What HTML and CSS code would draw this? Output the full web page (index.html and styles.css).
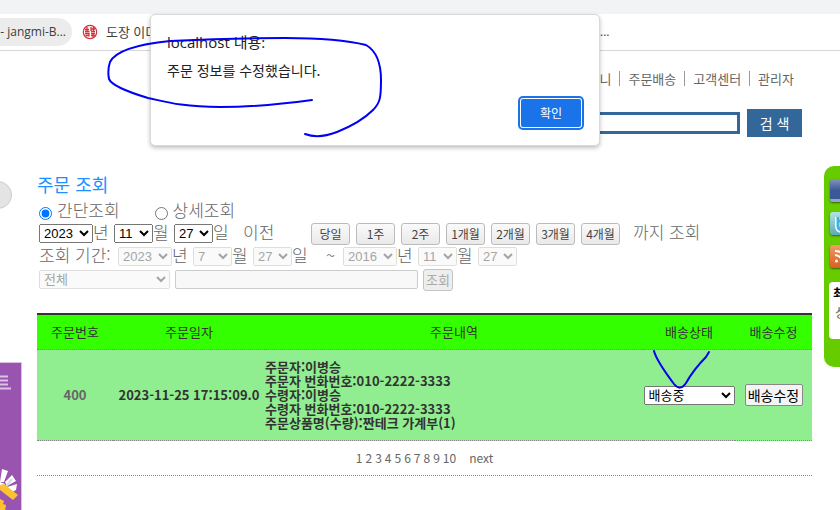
FILE: index.html
```
<!DOCTYPE html>
<html lang="ko">
<head>
  <meta charset="UTF-8">
  <title>주문 조회</title>
  <link rel="stylesheet" href="styles.css">
</head>
<body>
  <div class="tabstrip"></div>
  <div class="bookmarks">
    <a class="tab" href="#">- jangmi-B...</a>
    <a class="bookmark" href="#">
      <svg width="16" height="16" viewBox="0 0 16 16" fill="none" stroke="#d3343c">
        <circle cx="8" cy="8" r="6.7" stroke-width="1.2"/>
        <path d="M3 5.500h4M5 3v4M3 7.500h4.500M9 3v4M9 5h4M11.500 3v4.500M9 7.500h4M3 9.500h4v3M3.500 11.500h3M9 9.500h4M9 11.500h4M11 9v4.500" stroke-width="1.300"/>
      </svg>
      도장 이미지
    </a>
    <span class="more">...</span>
  </div>

  <header>
    <nav>
      <a href="#">장바구니</a>
      <a href="#">주문배송</a>
      <a href="#">고객센터</a>
      <a href="#">관리자</a>
    </nav>
    <form class="search">
      <input type="text" aria-label="검색어">
      <button type="button">검 색</button>
    </form>
  </header>

  <div class="page">
    <aside class="left">
      <button class="prev" type="button" aria-label="이전"></button>
      <a class="banner" href="#" aria-label="배너">
        <svg width="22" height="148" viewBox="0 0 22 148">
          <path d="M0 13.500h8M0 17.500h8M0 21.500h8M0 25.500h11" stroke="#dcc3e4" stroke-width="2"/>
          <path d="M0 119L2 106L8 108L4 119zM5 119L12 112L16 118L7 123zM7 124L17 121L16 127L12 129zM0 119L5 121L3 128L0 126z" fill="#fff"/>
          <path d="M3 127L12 116" stroke="#d8d8e6" stroke-width="2"/>
          <path d="M4 121L18 132L13 137L0 127V122z" fill="#fdc32f"/>
          <path d="M0 136L4 138L3 141L6 142L5 148H0z" fill="#fdc32f"/>
        </svg>
      </a>
    </aside>

    <main>
      <h1>주문 조회</h1>
      <form class="filter">
        <div class="line modes">
          <label><input type="radio" name="mode" checked>간단조회</label>
          <label><input type="radio" name="mode">상세조회</label>
        </div>
        <div class="line">
          <select class="year" aria-label="년"><option>2023</option></select><span class="unit">년</span>
          <select class="day" aria-label="월"><option>11</option></select><span class="unit">월</span>
          <select class="day" aria-label="일"><option>27</option></select><span class="unit">일</span>
          <span class="before">이전</span>
          <div class="periods">
            <button type="button">당일</button>
            <button type="button">1주</button>
            <button type="button">2주</button>
            <button type="button">1개월</button>
            <button type="button">2개월</button>
            <button type="button">3개월</button>
            <button type="button">4개월</button>
          </div>
          <span>까지 조회</span>
        </div>
        <div class="line">
          <span class="range">조회 기간:</span>
          <select class="year" aria-label="시작 년" disabled><option>2023</option></select><span class="unit">년</span>
          <select class="day" aria-label="시작 월" disabled><option>7</option></select><span class="unit">월</span>
          <select class="day" aria-label="시작 일" disabled><option>27</option></select><span class="unit">일</span>
          <span class="tilde">~</span>
          <select class="year" aria-label="끝 년" disabled><option>2016</option></select><span class="unit">년</span>
          <select class="day" aria-label="끝 월" disabled><option>11</option></select><span class="unit">월</span>
          <select class="day" aria-label="끝 일" disabled><option>27</option></select>
        </div>
        <div class="line keyword">
          <select class="kind" aria-label="조건" disabled><option>전체</option></select>
          <input type="text" aria-label="조회어" disabled>
          <button type="button" disabled>조회</button>
        </div>
      </form>

      <table>
        <colgroup>
          <col class="c-no"><col class="c-date"><col><col class="c-state"><col class="c-edit">
        </colgroup>
        <thead>
          <tr><th>주문번호</th><th>주문일자</th><th>주문내역</th><th>배송상태</th><th>배송수정</th></tr>
        </thead>
        <tbody>
          <tr class="order">
            <td class="no">400</td>
            <td>2023-11-25 17:15:09.0</td>
            <td class="detail">
              주문자:이병승<br>
              주문자 번화번호:010-2222-3333<br>
              수령자:이병승<br>
              수령자 번화번호:010-2222-3333<br>
              주문상품명(수량):짠테크 가계부(1)
            </td>
            <td><select class="state" aria-label="배송상태"><option>배송중</option></select></td>
            <td><button class="edit" type="button">배송수정</button></td>
          </tr>
          <tr>
            <td colspan="5">
              <div class="pages">
                <a href="#">1</a><a href="#">2</a><a href="#">3</a><a href="#">4</a><a href="#">5</a><a href="#">6</a><a href="#">7</a><a href="#">8</a><a href="#">9</a><a href="#">10</a><a class="next" href="#">next</a>
              </div>
            </td>
          </tr>
        </tbody>
      </table>
    </main>

    <aside class="quick">
      <a class="sns facebook" href="#" aria-label="facebook"></a>
      <a class="sns twitter" href="#" aria-label="twitter">
        <svg width="23" height="23" viewBox="0 0 23 23"><path d="M8 5v9q0 4 5 4M8 9h6" fill="none" stroke="#fff" stroke-width="6"/><path d="M8 5v9q0 4 5 4M8 9h6" fill="none" stroke="#35b5e8" stroke-width="3"/></svg>
      </a>
      <a class="sns rss" href="#" aria-label="rss">
        <svg width="23" height="23" viewBox="0 0 23 23" fill="none" stroke="#fff" stroke-width="2"><path d="M5 6q11 0 12 12M5 10q7 1 8 8"/><circle cx="6.500" cy="16" r="1.500" fill="#fff" stroke="none"/></svg>
      </a>
      <div class="recent"><b>최</b><span>상</span></div>
    </aside>
  </div>

  <div class="alert" role="dialog">
    <div class="origin">localhost 내용:</div>
    <p>주문 정보를 수정했습니다.</p>
    <button type="button">확인</button>
  </div>

  <svg class="ink" width="840" height="510" viewBox="0 0 840 510" fill="none" stroke="#0000f5" stroke-width="2" stroke-linecap="round">
    <path d="M312 100C276 105 250 107 220 107C180 107 163 101 148 98C128 92 112 86 109 79C108 74 108 68 110 62C116 50 140 44 170 41C210 39 250 38 285 38C325 38 350 41 366 45C378 52 381 66 381 80C381 98 380 103 373 110C365 118 352 126 337 132C324 137 313 137 305 134"/>
    <path d="M654 351C656 359 668 376 674 384C678 389 682 389 686 383C694 369 701 362 706 357L709 352"/>
  </svg>
</body>
</html>
```
FILE: styles.css
```
* {box-sizing:border-box;}
body {margin:0;height:100vh;display:flex;flex-direction:column;overflow:hidden;position:relative;
  background:#fff;color:#666;font:13px/18px "Noto Sans CJK KR",sans-serif;}
a {color:inherit;text-decoration:none;}
form {margin:0;}
input, select, button {margin:0;}

/* browser bar */
.tabstrip {height:14px;background:#f1f3f4;}
.bookmarks {display:flex;align-items:center;height:37px;border-bottom:1px solid #d5d7da;
  color:#3c4043;font:12px/28px "Open Sans","Noto Sans CJK KR",sans-serif;}
.tab {width:72px;height:28px;border-radius:0 14px 14px 0;background:#ececec;white-space:nowrap;
  display:flex;justify-content:flex-end;padding-right:6px;}
.bookmark {display:flex;align-items:center;gap:8px;margin-left:10px;width:500px;font-size:13px;}
.more {margin-left:18px;}

/* header */
header {display:flex;flex-direction:column;align-items:flex-end;gap:21px;padding:18px 38px 0 0;}
nav {display:flex;}
nav a {line-height:15px;padding:0 8px;border-left:1px solid #999;margin:2px 0;}
nav a:first-child {border:0;}
.search {display:flex;align-items:center;gap:7px;}
.search input {width:360px;height:22px;border:3px solid #369;}
.search button {width:55px;height:28px;border:0;background:#369;color:#fff;
  font:14px/20px "Noto Sans CJK KR",sans-serif;}

/* page */
.page {flex:1;display:grid;grid-template-columns:22px 1fr 16px;padding-top:29px;}
.left {display:flex;flex-direction:column;justify-content:space-between;overflow:hidden;}
.prev {width:28px;height:28px;border:1px solid #ccc;border-radius:50%;background:#e4e4e4;
  margin:15px 0 0 -16px;padding:0;}
.banner {height:148px;border:1px solid #dcc0e4;border-width:1px 1px 0 0;background:#9954b0;overflow:hidden;}
main {padding:7px 12px 0 15px;min-width:0;}
h1 {margin:0 0 5px;color:#1e90ff;font-size:18px;font-weight:400;line-height:22px;}

.filter {font-size:17px;font-weight:300;line-height:22px;padding-left:2px;}
.line {display:flex;align-items:center;height:23px;white-space:nowrap;}
.line > span {padding-bottom:3px;}
.modes {height:22px;gap:35px;}
.modes label {display:flex;align-items:flex-end;gap:5px;height:22px;line-height:20px;padding-bottom:2px;}
.modes input {width:13px;height:13px;}
.filter select, .filter .keyword input {height:19px;font:13px "Liberation Sans","Noto Sans CJK KR",sans-serif;}
.year {width:54px;}
.day {width:39px;}
.unit {width:21px;}
.before {width:77px;padding-left:9px;}
.range {width:79px;}
.tilde {width:30px;padding-left:13px;}
.periods {display:flex;gap:6px;margin-right:13px;}
.periods button {width:39px;height:22px;padding:0;border:1px solid #bbb;border-radius:3px;
  background:linear-gradient(#fafafa,#e9e9e9);color:#444;font:12px/18px "Noto Sans CJK KR",sans-serif;}
.keyword {gap:5px;}
.kind {width:131px;}
.keyword input {width:243px;border:1px solid #ccc;border-radius:2px;background:#f8f8f8;}
.keyword button {width:30px;height:22px;padding:0;border:1px solid #c4c4c4;border-radius:3px;background:#eee;
  color:#aaa;font:13px/18px "Noto Sans CJK KR",sans-serif;}

/* orders */
table {width:100%;margin-top:22px;border-collapse:separate;border-spacing:0;table-layout:fixed;
  border-top:2px solid #333;color:#333;text-align:center;}
.c-no {width:76px;}
.c-date {width:152px;}
.c-state {width:92px;}
.c-edit {width:77px;}
th, td {padding:0;border-bottom:1px dotted #888;}
th {height:35px;background:#3f0;font-weight:400;}
.order td {height:91px;background:#90ee90;font-weight:700;line-height:14px;white-space:nowrap;}
.order .no {color:#666;}
.order .detail {text-align:left;}
.state {width:91px;height:19px;font:13px "Liberation Sans","Noto Sans CJK KR",sans-serif;}
.edit {width:58px;height:22px;padding:0;border:1px solid #888;border-radius:2px;background:#f4f4f4;color:#000;
  font:14px/18px "Noto Sans CJK KR",sans-serif;}
.pages {display:flex;justify-content:center;gap:3px;height:34px;align-items:center;color:#666;font-size:12px;}
.next {margin-left:10px;}

/* quick menu */
.quick {height:201px;padding:13px 0 0 5px;border-radius:10px 0 0 10px;background:#6c0;overflow:hidden;
  display:flex;flex-direction:column;gap:10px;}
.sns {width:23px;height:23px;margin-left:1px;border-radius:3px;box-shadow:0 1px 2px rgba(0,0,0,.5);}
.facebook {background:linear-gradient(#8694bd,#3b5998 50%,#3b5998 85%,#8fa5cc 86%);}
.twitter {background:linear-gradient(#b3e2e4,#5eaab5);}
.rss {background:linear-gradient(#f09a6c,#d95f1c);}
.recent {width:60px;height:57px;margin-top:4px;padding:3px 4px;border-radius:4px;background:#fff;
  display:flex;flex-direction:column;gap:1px;}
.recent b {color:#000;font-size:12px;line-height:16px;}
.recent span {padding-left:2px;line-height:20px;}

/* alert box */
.alert {position:absolute;left:150px;top:14px;width:450px;padding:17px 16px 18px;border:1px solid #d9d9d9;
  border-radius:5px;background:#fff;box-shadow:0 2px 4px rgba(0,0,0,.25);color:#202124;
  display:flex;flex-direction:column;}
.origin {font:15px/20px "Open Sans","Noto Sans CJK KR",sans-serif;}
.alert p {margin:9px 0 20px;font-size:14px;line-height:18px;}
.alert button {align-self:flex-end;width:60px;height:28px;margin-right:2px;border:0;border-radius:2px;
  background:#1a73e8;color:#fff;box-shadow:0 0 0 1px #fff,0 0 0 3px #1a73e8;
  font:12px/18px "Noto Sans CJK KR",sans-serif;}
.ink {position:absolute;left:0;top:0;pointer-events:none;}
```
